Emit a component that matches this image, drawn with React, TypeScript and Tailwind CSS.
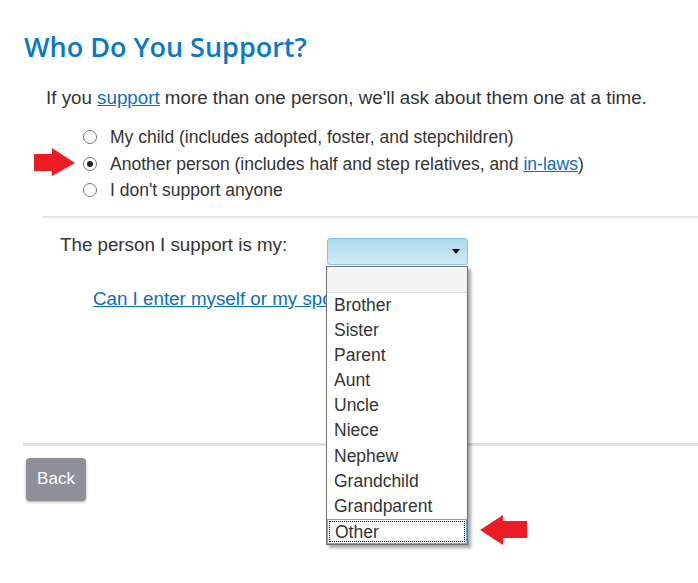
import React from "react";

const relations = ["Brother", "Sister", "Parent", "Aunt", "Uncle", "Niece", "Nephew", "Grandchild", "Grandparent", "Other"];

const choices = [
  { label: "My child (includes adopted, foster, and stepchildren)", checked: false },
  { label: "Another person (includes half and step relatives, and ", link: "in-laws", checked: true },
  { label: "I don't support anyone", checked: false },
];

const Radio = ({ checked }: { checked: boolean }) => (
  <span className="flex h-[14px] w-[14px] shrink-0 items-center justify-center rounded-full border border-[#767676] bg-white">
    {checked ? <span className="h-[6px] w-[6px] rounded-full bg-[#222]" /> : null}
  </span>
);

const App = () => {
  return (
    <div className="relative h-[583px] w-[698px] overflow-hidden bg-white pt-[30px] font-['Liberation_Sans',Arial,sans-serif] text-[18.75px] text-[#333]">
      <h1 className="pl-6 font-['Open_Sans',sans-serif] text-[27px] font-semibold leading-[34px] text-[#0a78c8]">
        Who Do You Support?
      </h1>

      <p className="mt-[22px] pl-[46px] leading-6">
        If you <a className="text-[#0a6ebd] underline">support</a> more than one person, we'll ask about them one at a
        time.
      </p>

      <div className="mt-[14px] flex flex-col pl-[83px] text-[17.5px]">
        {choices.map((c) => (
          <div key={c.label} className="flex h-[26.5px] items-center gap-[13px]">
            <Radio checked={c.checked} />
            <span className="whitespace-nowrap leading-6">
              {c.label}
              {c.link ? (
                <>
                  <a className="text-[#0a6ebd] underline">{c.link}</a>)
                </>
              ) : null}
            </span>
          </div>
        ))}
      </div>

      <div className="ml-[42px] mt-[12px] h-[2px] bg-[#e6e6e6]" />

      <div className="mt-[15px] flex items-start pl-[60px]">
        <span className="w-[267px] whitespace-nowrap leading-6">The person I support is my:</span>
        <div className="relative mt-[5px]">
          <div className="flex h-[27px] w-[141px] items-center justify-end rounded-[3px] border border-[#86c1e6] bg-gradient-to-b from-[#acd9ef] to-[#d3eaf5] pr-[7px]">
            <span className="h-0 w-0 border-x-[4px] border-t-[5px] border-x-transparent border-t-black" />
          </div>
          <ul className="absolute left-[-1px] top-[28px] z-10 w-[142px] border border-[#6f6f6f] bg-white text-[17.5px] leading-[25px] shadow-[3px_3px_3px_rgba(0,0,0,0.35)]">
            <li className="h-[26px] border-b border-[#dcdcdc] bg-[#f4f4f4]" />
            {relations.map((r) =>
              r === "Other" ? (
                <li key={r} className="h-[25px] border border-[#63aedc] p-px">
                  <div className="h-full border border-dotted border-black pl-[5px] leading-[20px]">{r}</div>
                </li>
              ) : (
                <li key={r} className="h-[25.2px] pl-[7px]">
                  {r}
                </li>
              )
            )}
          </ul>
        </div>
      </div>

      <div className="mt-[22px] pl-[93px] leading-6">
        <a className="whitespace-nowrap text-[#0a6ebd] underline">Can I enter myself or my spouse?</a>
      </div>

      <div className="ml-[23px] mt-[132px] h-[3px] bg-[#dedede]" />

      <button className="ml-[26px] mt-[12px] flex h-[43px] w-[60px] items-center justify-center rounded-[4px] bg-[#8d9097] text-[17px] text-white shadow-[0_1px_3px_rgba(0,0,0,0.35)]">
        Back
      </button>

      <svg className="absolute left-[34px] top-[148px]" width="42" height="29" viewBox="0 0 42 29">
        <polygon points="0,6 18,6 18,0 41,15 18,28 18,23 0,23" fill="#ec1c24" />
      </svg>
      <svg className="absolute left-[480px] top-[515px]" width="48" height="31" viewBox="0 0 48 31">
        <polygon points="0,15 23,0 23,6 47,6 47,23 23,23 23,30" fill="#ec1c24" />
      </svg>
    </div>
  );
};

export default App;
